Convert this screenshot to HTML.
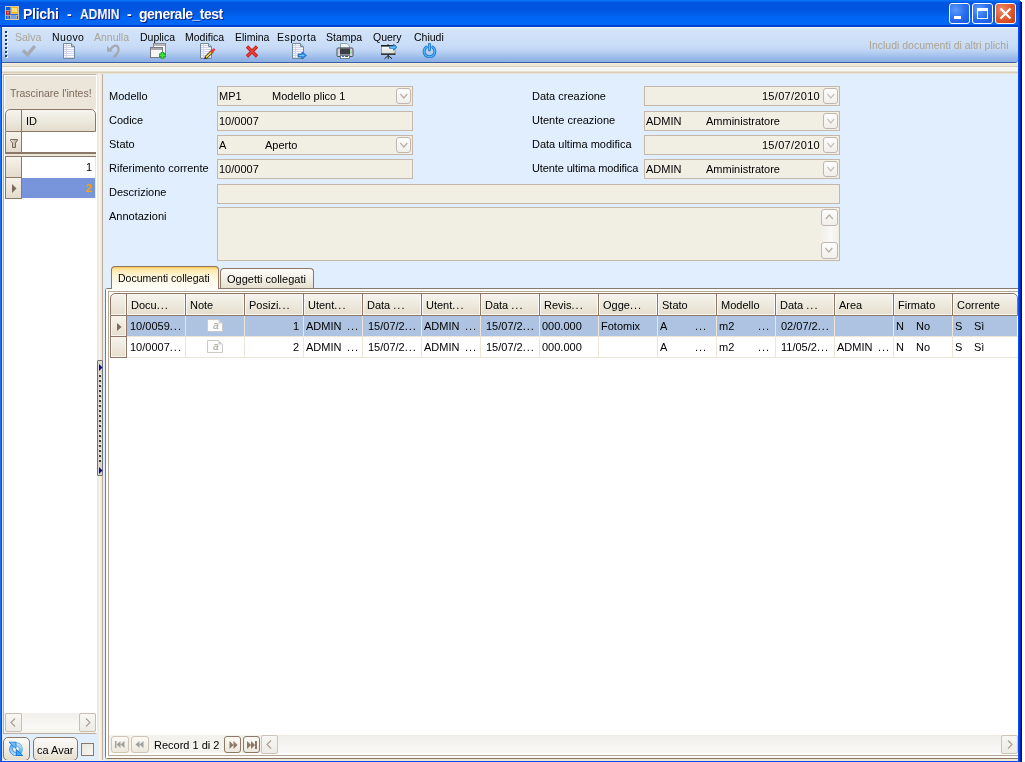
<!DOCTYPE html>
<html><head><meta charset="utf-8">
<style>
*{box-sizing:border-box;margin:0;padding:0}
html,body{width:1025px;height:762px;overflow:hidden;background:#fff}
.t,.lbl,.tbl,.ttl{will-change:transform}
body{position:relative;font-family:"Liberation Sans",sans-serif;font-size:11px;color:#000}
.a{position:absolute}
.t{position:absolute;white-space:nowrap;line-height:13px}
/* window */
#title{left:0;top:0;width:1022px;height:27px;background:linear-gradient(#0a72f8 0px,#0a72f8 1px,#0058e2 2px,#0054e0 3px,#0054e0 9px,#005ee9 14px,#0066f6 18px,#0066f6 25px,#0048d8 25px,#0036c4 27px)}
#lb{left:0;top:27px;width:2px;height:735px;background:linear-gradient(90deg,#1e6ef2 50%,#0050e0 50%)}
#rb{left:1018px;top:2px;width:4px;height:760px;background:linear-gradient(90deg,#0a50f0 0,#0a50f0 1px,#0040e0 1px,#0040e0 2px,#0024b0 2px,#0024b0 3px,#000f80 3px)}
#bb{left:0;top:761px;width:1022px;height:1px;background:#0846ee}
.ttl{position:absolute;top:6px;font-size:14px;font-weight:bold;color:#fff;text-shadow:1px 1px 0 #0a1e80;line-height:17px;white-space:nowrap}
/* toolbar */
#tb{left:2px;top:27px;width:1016px;height:36px;background:linear-gradient(#f0f6fe 0,#f0f6fe 1px,#dde9fb 1px,#d2e3f9 4px,#cadef7 17px,#c4d8f5 22px,#adc9ef 27px,#94b5e7 32px,#8db0e5 35px);border-bottom:1px solid #3a5ea8;border-bottom-right-radius:3px}
.tbl{position:absolute;top:31px;line-height:13px;white-space:nowrap}
.dis{color:#aca492}
#band{left:2px;top:63px;width:1016px;height:11px;background:linear-gradient(#f3efd8 0,#f3efd8 1px,#ebe8d8 1px,#ebe8d8 3px,#d8cfbf 3px,#d8cfbf 4px,#f8f7f3 4px,#f5f4f0 8px,#d8cebc 9px,#d8cebc 10px,#ece6d0 10px)}
/* main content */
#content{left:103px;top:74px;width:915px;height:686px;background:#e0eefd}
#left{left:2px;top:74px;width:95px;height:686px;background:#e0eefd}
#lpanel{left:3px;top:74px;width:94px;height:660px;background:#fff;border:1px solid #a89682}
#splitter{left:97px;top:74px;width:6px;height:686px;background:linear-gradient(90deg,#f1ece2 0,#ebe5d8 1px,#f7f4ee 2px,#f3efe6 4px,#e9e2d5 5px,#bfae9c 5px)}
.lbl{position:absolute;line-height:13px;white-space:nowrap}
.el{letter-spacing:1px}
.box{position:absolute;background:#f1eee4;border:1px solid #c5b8aa}
.dd{position:absolute;width:15px;height:16px;border:1px solid #c0b6ae;border-radius:3px;background:linear-gradient(#fdfdfc,#f0efeb)}
.dd svg{position:absolute;left:3px;top:4px}
</style></head><body>
<div id="title" class="a"></div>
<div id="lb" class="a"></div>


<!-- app icon -->
<svg class="a" style="left:5px;top:6px" width="14" height="14" viewBox="0 0 14 14">
<rect x="0.5" y="0.5" width="13" height="13" fill="#0a58e8" stroke="#d9c8a6"/>
<rect x="1" y="1" width="12" height="12" fill="none"/>
<rect x="5.5" y="0.5" width="8" height="7.5" fill="#d8c8a6"/>
<rect x="6" y="1" width="7" height="6.5" fill="#f2b812"/>
<rect x="7" y="2" width="5" height="4" fill="#ffe070"/>
<rect x="0.5" y="4" width="5" height="0.8" fill="#d8c8a6"/>
<rect x="1" y="4.8" width="4" height="4" fill="#c81a10"/>
<rect x="2" y="5.5" width="2" height="2" fill="#f06a60"/>
<rect x="0.5" y="8.8" width="13" height="0.8" fill="#d8c8a6"/>
<rect x="6" y="9.5" width="5" height="3.5" fill="#6ea0f0"/>
<rect x="5.2" y="9" width="0.8" height="4.5" fill="#d8c8a6"/>
<rect x="11.2" y="9" width="0.8" height="4.5" fill="#d8c8a6"/>
<rect x="2.6" y="9" width="0.8" height="4.5" fill="#d8c8a6"/>
</svg>
<div class="ttl" style="left:23px;letter-spacing:-0.3px">Plichi</div><div class="ttl" style="left:67px">-</div><div class="ttl" style="left:80px;transform:scaleX(0.86);transform-origin:0 0">ADMIN</div><div class="ttl" style="left:127px">-</div><div class="ttl" style="left:139px;letter-spacing:-0.5px">generale_test</div>
<!-- caption buttons -->
<div class="a" style="left:949px;top:3px;width:21px;height:21px;border:1px solid #fff;border-radius:3px;background:radial-gradient(circle at 30% 30%,#5d9af8,#2a6ef0 50%,#1454e0)"><div class="a" style="left:4px;top:12px;width:7px;height:3px;background:#fff"></div></div>
<div class="a" style="left:972px;top:3px;width:21px;height:21px;border:1px solid #fff;border-radius:3px;background:radial-gradient(circle at 30% 30%,#5d9af8,#2a6ef0 50%,#1454e0)"><div class="a" style="left:4px;top:4px;width:11px;height:11px;border:1px solid #fff;border-top-width:3px"></div></div>
<div class="a" style="left:995px;top:3px;width:21px;height:21px;border:1px solid #fff;border-radius:3px;background:radial-gradient(circle at 30% 30%,#f08a6a,#e05a30 50%,#c83a10)">
<svg class="a" style="left:3px;top:3px" width="13" height="13" viewBox="0 0 13 13"><path d="M1.5 1.5 L11.5 11.5 M11.5 1.5 L1.5 11.5" stroke="#fff" stroke-width="2.2"/></svg></div>

<!-- toolbar -->
<div id="tb" class="a"></div>
<div id="band" class="a"></div>
<!-- gripper -->
<svg class="a" style="left:4px;top:30px" width="4" height="28" viewBox="0 0 4 28">
<g fill="#fff"><rect x="2" y="2" width="2" height="2"/><rect x="2" y="6" width="2" height="2"/><rect x="2" y="10" width="2" height="2"/><rect x="2" y="14" width="2" height="2"/><rect x="2" y="18" width="2" height="2"/><rect x="2" y="22" width="2" height="2"/><rect x="2" y="26" width="2" height="2"/></g>
<g fill="#1c3a78"><rect x="1" y="1" width="2" height="2"/><rect x="1" y="5" width="2" height="2"/><rect x="1" y="9" width="2" height="2"/><rect x="1" y="13" width="2" height="2"/><rect x="1" y="17" width="2" height="2"/><rect x="1" y="21" width="2" height="2"/><rect x="1" y="25" width="2" height="2"/></g>
</svg>
<div class="tb-items" style="font-size:10.5px">
<div class="tbl dis" style="left:15px">Salva</div>
<div class="tbl" style="left:52px;letter-spacing:0.4px">Nuovo</div>
<div class="tbl dis" style="left:94px">Annulla</div>
<div class="tbl" style="left:140px">Duplica</div>
<div class="tbl" style="left:185px">Modifica</div>
<div class="tbl" style="left:235px">Elimina</div>
<div class="tbl" style="left:277px;letter-spacing:0.5px">Esporta</div>
<div class="tbl" style="left:326px">Stampa</div>
<div class="tbl" style="left:373px">Query</div>
<div class="tbl" style="left:414px">Chiudi</div>
<div class="tbl dis" style="left:869px;top:39px">Includi documenti di altri plichi</div>
</div>
<!-- toolbar icons -->
<svg class="a" style="left:21px;top:44px" width="16" height="14" viewBox="0 0 16 14"><path d="M2 6.3 L6.5 10.8 L13.8 2" fill="none" stroke="#a6aab2" stroke-width="3.3" stroke-linejoin="miter"/></svg>
<svg class="a" style="left:63px;top:43px" width="12" height="16" viewBox="0 0 12 16"><path d="M0.5 0.5 H8.5 L11.5 3.5 V15.5 H0.5 Z" fill="#fff" stroke="#6f8c9a"/><g stroke="#d2d2ee"><path d="M1 2.5 H8 M1 4.5 H11 M1 6.5 H11 M1 8.5 H11 M1 10.5 H11 M1 12.5 H11 M1 14.5 H11"/><path d="M3.5 1 V15"/></g><path d="M8.5 0.5 V3.5 H11.5" fill="#c4d2d8" stroke="#6f8c9a"/></svg>
<svg class="a" style="left:106px;top:43px" width="15" height="16" viewBox="0 0 15 16"><path d="M4.5 6.5 C6.5 2.5 10.5 1.5 12 4 C13.5 6.5 12 10.5 8.5 13.5" fill="none" stroke="#a4a8b0" stroke-width="2.4" stroke-linecap="round"/><path d="M1 3 V8.7 H6.8 Z" fill="#a4a8b0"/></svg>
<svg class="a" style="left:149px;top:43px" width="18" height="17" viewBox="0 0 18 17"><rect x="4.5" y="0.5" width="12" height="10" fill="#fafafa" stroke="#868a92"/><rect x="5" y="1" width="11" height="2" fill="#b4b6ba"/><rect x="1.5" y="4.5" width="12" height="10" fill="#f6f6f6" stroke="#767a82"/><rect x="2" y="5" width="11" height="2" fill="#a8aaae"/><path d="M13.5 9 V15.8 M10 12.4 H17" stroke="#16a016" stroke-width="3.6"/><path d="M13.5 9.6 V15.2 M10.6 12.4 H16.4" stroke="#44e444" stroke-width="1.6"/></svg>
<svg class="a" style="left:200px;top:43px" width="15" height="16" viewBox="0 0 15 16"><path d="M0.5 0.5 H8.5 L11.5 3.5 V15.5 H0.5 Z" fill="#fff" stroke="#6f8c9a"/><g stroke="#d2d2ee"><path d="M1 2.5 H8 M1 4.5 H11 M1 6.5 H11 M1 8.5 H11 M1 10.5 H11 M1 12.5 H11 M1 14.5 H11"/><path d="M3.5 1 V15"/></g><path d="M8.5 0.5 V3.5 H11.5" fill="#c4d2d8" stroke="#6f8c9a"/><path d="M5.5 15 L12.5 8" stroke="#3a3a20" stroke-width="3.2"/><path d="M5.8 14.7 L12.2 8.3" stroke="#f0d040" stroke-width="1.8"/><path d="M12 8.5 L13.8 6.7" stroke="#e83838" stroke-width="2.6" stroke-linecap="round"/><path d="M4.6 15.6 L5.8 14.4" stroke="#101010" stroke-width="1.4"/></svg>
<svg class="a" style="left:245px;top:45px" width="14" height="13" viewBox="0 0 14 13"><path d="M2 1.5 L12 11.5 M12 1.5 L2 11.5" stroke="#c81c1c" stroke-width="3.4"/><path d="M2.5 2 L11.5 11 M11.5 2 L2.5 11" stroke="#e84a3a" stroke-width="1.4"/></svg>
<svg class="a" style="left:292px;top:43px" width="15" height="17" viewBox="0 0 15 17"><path d="M0.5 0.5 H8.5 L11.5 3.5 V15.5 H0.5 Z" fill="#fff" stroke="#6f8c9a"/><g stroke="#d2d2ee"><path d="M1 2.5 H8 M1 4.5 H11 M1 6.5 H11 M1 8.5 H11 M1 10.5 H11 M1 12.5 H11 M1 14.5 H11"/><path d="M3.5 1 V15"/></g><path d="M8.5 0.5 V3.5 H11.5" fill="#c4d2d8" stroke="#6f8c9a"/><path d="M6 11 H10 V9 L14.5 12.5 L10 16 V14 H6 Z" fill="#3a9aea" stroke="#1a5cb0" stroke-width="0.8"/><path d="M7 12.5 H12" stroke="#8ad4ff" stroke-width="0.8"/></svg>
<svg class="a" style="left:336px;top:43px" width="18" height="16" viewBox="0 0 18 16"><path d="M4.5 0.5 H11 L13.5 3 V5 H4.5 Z" fill="#eef6f4" stroke="#8aa2a8"/><rect x="1" y="5" width="16" height="8.5" rx="1" fill="#d2d3dc" stroke="#4a525a"/><rect x="4" y="5.5" width="10" height="6" fill="#3c3e46"/><rect x="4" y="11.3" width="10" height="1.7" fill="#8c8c9c"/><rect x="4.5" y="12.5" width="9" height="3" fill="#fff" stroke="#5a6a78" stroke-width="0.8"/><rect x="6" y="13" width="2" height="1" fill="#2a70e0"/><rect x="9" y="13" width="3" height="1" fill="#207a50"/><rect x="14.2" y="8.8" width="1.3" height="1.3" fill="#30f030"/></svg>
<svg class="a" style="left:380px;top:43px" width="18" height="17" viewBox="0 0 18 17"><defs><linearGradient id="scr" x1="0" y1="0" x2="0" y2="1"><stop offset="0" stop-color="#fbfcfb"/><stop offset="1" stop-color="#d4dcd8"/></linearGradient></defs><rect x="1.5" y="3" width="13.5" height="8" fill="url(#scr)" stroke="#707070" stroke-width="0.6"/><rect x="1" y="2" width="14.5" height="1.5" fill="#1c1c1c"/><rect x="7.5" y="1" width="1" height="1" fill="#303030"/><rect x="1" y="10.5" width="14.5" height="1.3" fill="#1c1c1c"/><path d="M8.2 11.5 V15.8 M8.2 12.5 L4.5 15.8 M8.2 12.5 L12 15.8" stroke="#202020" stroke-width="1"/><path d="M9.5 3 H13.5 V1 L17 4.2 L13.5 7.4 V5.4 H9.5 Z" fill="#3aa0f0" stroke="#1a68c0" stroke-width="0.6"/><path d="M10.5 4.2 H15" stroke="#a8e0ff" stroke-width="0.7"/></svg>
<svg class="a" style="left:422px;top:43px" width="15" height="15" viewBox="0 0 15 15"><path d="M4.2 4.2 A5.4 5.4 0 1 0 10.8 4.2" fill="none" stroke="#1e7ad4" stroke-width="3" stroke-linecap="round"/><path d="M4.2 4.2 A5.4 5.4 0 1 0 10.8 4.2" fill="none" stroke="#5ab6f0" stroke-width="1.2" stroke-linecap="round"/><path d="M7.5 1.2 V7" stroke="#1e7ad4" stroke-width="2.8" stroke-linecap="round"/><path d="M7.5 1.6 V6.6" stroke="#6ac0f4" stroke-width="1" stroke-linecap="round"/></svg>
<!-- main -->
<div id="left" class="a"></div>
<div id="content" class="a"></div>
<div id="splitter" class="a"></div>
<!-- form -->
<div class="lbl" style="left:109px;top:90px">Modello</div>
<div class="lbl" style="left:109px;top:114px">Codice</div>
<div class="lbl" style="left:109px;top:138px">Stato</div>
<div class="lbl" style="left:109px;top:162px">Riferimento corrente</div>
<div class="lbl" style="left:109px;top:186px">Descrizione</div>
<div class="lbl" style="left:109px;top:210px">Annotazioni</div>
<div class="lbl" style="left:532px;top:90px">Data creazione</div>
<div class="lbl" style="left:532px;top:114px">Utente creazione</div>
<div class="lbl" style="left:532px;top:138px">Data ultima modifica</div>
<div class="lbl" style="left:532px;top:162px;letter-spacing:-0.12px">Utente ultima modifica</div>

<div class="box" style="left:217px;top:86px;width:196px;height:20px"></div>
<div class="lbl" style="left:219px;top:90px">MP1</div><div class="lbl" style="left:272px;top:90px">Modello plico 1</div>
<div class="dd" style="left:396px;top:88px"><svg width="9" height="7" viewBox="0 0 9 7"><path d="M0.3 1 L3.8 5 L7.3 1" fill="none" stroke="#b5aca4" stroke-width="1.2"/></svg></div>

<div class="box" style="left:217px;top:111px;width:196px;height:20px"></div>
<div class="lbl" style="left:219px;top:115px">10/0007</div>

<div class="box" style="left:217px;top:135px;width:196px;height:20px"></div>
<div class="lbl" style="left:219px;top:139px">A</div><div class="lbl" style="left:265px;top:139px">Aperto</div>
<div class="dd" style="left:396px;top:137px"><svg width="9" height="7" viewBox="0 0 9 7"><path d="M0.3 1 L3.8 5 L7.3 1" fill="none" stroke="#b5aca4" stroke-width="1.2"/></svg></div>

<div class="box" style="left:217px;top:159px;width:196px;height:20px"></div>
<div class="lbl" style="left:219px;top:163px">10/0007</div>

<div class="box" style="left:217px;top:184px;width:623px;height:20px"></div>
<div class="box" style="left:217px;top:207px;width:623px;height:54px"></div>
<div class="a" style="left:821px;top:209px;width:17px;height:50px;background:linear-gradient(90deg,#f0eee8,#faf9f6 60%,#f2f0ea)"></div>
<div class="dd" style="left:821px;top:209px;width:17px;height:17px"><svg width="9" height="7" viewBox="0 0 9 7"><path d="M0.8 5 L4.3 1 L7.8 5" fill="none" stroke="#b5aca4" stroke-width="1.2"/></svg></div>
<div class="dd" style="left:821px;top:242px;width:17px;height:17px"><svg width="9" height="7" viewBox="0 0 9 7"><path d="M0.3 1 L3.8 5 L7.3 1" fill="none" stroke="#b5aca4" stroke-width="1.2"/></svg></div>

<div class="box" style="left:644px;top:86px;width:196px;height:20px"></div>
<div class="lbl" style="left:644px;top:90px;width:176px;text-align:right;letter-spacing:0.3px">15/07/2010</div>
<div class="dd" style="left:823px;top:88px"><svg width="9" height="7" viewBox="0 0 9 7"><path d="M0.3 1 L3.8 5 L7.3 1" fill="none" stroke="#c8c0b8" stroke-width="1.2"/></svg></div>

<div class="box" style="left:644px;top:111px;width:196px;height:20px"></div>
<div class="lbl" style="left:646px;top:115px">ADMIN</div><div class="lbl" style="left:706px;top:115px">Amministratore</div>
<div class="dd" style="left:823px;top:113px"><svg width="9" height="7" viewBox="0 0 9 7"><path d="M0.3 1 L3.8 5 L7.3 1" fill="none" stroke="#c8c0b8" stroke-width="1.2"/></svg></div>

<div class="box" style="left:644px;top:135px;width:196px;height:20px"></div>
<div class="lbl" style="left:644px;top:139px;width:176px;text-align:right;letter-spacing:0.3px">15/07/2010</div>
<div class="dd" style="left:823px;top:137px"><svg width="9" height="7" viewBox="0 0 9 7"><path d="M0.3 1 L3.8 5 L7.3 1" fill="none" stroke="#c8c0b8" stroke-width="1.2"/></svg></div>

<div class="box" style="left:644px;top:159px;width:196px;height:20px"></div>
<div class="lbl" style="left:646px;top:163px">ADMIN</div><div class="lbl" style="left:706px;top:163px">Amministratore</div>
<div class="dd" style="left:823px;top:161px"><svg width="9" height="7" viewBox="0 0 9 7"><path d="M0.3 1 L3.8 5 L7.3 1" fill="none" stroke="#c8c0b8" stroke-width="1.2"/></svg></div>
<!-- tabs -->
<div class="a" style="left:105px;top:288px;width:913px;height:471px;border:1px solid #8d7767;border-right:0;border-radius:3px 0 0 3px;background:#fbfaf7"></div>
<div class="a" style="left:106px;top:289px;width:912px;height:469px;border-left:2px solid #fff;border-top:2px solid #fff"></div>
<div class="a" style="left:220px;top:268px;width:94px;height:20px;border:1px solid #8d7767;border-bottom:0;border-radius:4px 4px 0 0;background:linear-gradient(#fcfbf8,#f1ede3 60%,#e6dfcf)"></div>
<div class="t" style="left:227px;top:273px">Oggetti collegati</div>
<div class="a" style="left:111px;top:266px;width:108px;height:23px;border:1px solid #8d7767;border-bottom:0;border-radius:4px 4px 0 0;background:linear-gradient(#fcc14a 0,#fdd77a 1px,#fde9b0 3px,#fef5d8 9px,#fffbee 16px,#fffdf8 23px)"></div>
<div class="t" style="left:118px;top:272px;font-size:10.5px">Documenti collegati</div>
<div class="a" style="left:108px;top:291px;width:910px;height:465px;border:1px solid #b8a898;border-right:0;background:#fff"></div>
<div class="a" style="left:110px;top:293px;width:908px;height:23px;border:1px solid #8d7767;border-radius:5px 5px 0 0;background:linear-gradient(#f6f4ee,#ede8dc 55%,#e5ddcc)"></div>
<div class="a" style="left:111px;top:314px;width:906px;height:1px;background:rgba(255,255,255,.75)"></div>
<div class="a" style="left:125px;top:296px;width:3px;height:19px;background:linear-gradient(90deg,rgba(255,255,255,.75) 33%,#8d7767 33%,#8d7767 67%,rgba(255,255,255,.75) 67%)"></div>
<div class="a" style="left:126px;top:294px;width:1px;height:2px;background:#8d7767"></div>
<div class="a" style="left:184px;top:296px;width:3px;height:19px;background:linear-gradient(90deg,rgba(255,255,255,.75) 33%,#8d7767 33%,#8d7767 67%,rgba(255,255,255,.75) 67%)"></div>
<div class="a" style="left:185px;top:294px;width:1px;height:2px;background:#8d7767"></div>
<div class="a" style="left:243px;top:296px;width:3px;height:19px;background:linear-gradient(90deg,rgba(255,255,255,.75) 33%,#8d7767 33%,#8d7767 67%,rgba(255,255,255,.75) 67%)"></div>
<div class="a" style="left:244px;top:294px;width:1px;height:2px;background:#8d7767"></div>
<div class="a" style="left:302px;top:296px;width:3px;height:19px;background:linear-gradient(90deg,rgba(255,255,255,.75) 33%,#8d7767 33%,#8d7767 67%,rgba(255,255,255,.75) 67%)"></div>
<div class="a" style="left:303px;top:294px;width:1px;height:2px;background:#8d7767"></div>
<div class="a" style="left:361px;top:296px;width:3px;height:19px;background:linear-gradient(90deg,rgba(255,255,255,.75) 33%,#8d7767 33%,#8d7767 67%,rgba(255,255,255,.75) 67%)"></div>
<div class="a" style="left:362px;top:294px;width:1px;height:2px;background:#8d7767"></div>
<div class="a" style="left:420px;top:296px;width:3px;height:19px;background:linear-gradient(90deg,rgba(255,255,255,.75) 33%,#8d7767 33%,#8d7767 67%,rgba(255,255,255,.75) 67%)"></div>
<div class="a" style="left:421px;top:294px;width:1px;height:2px;background:#8d7767"></div>
<div class="a" style="left:479px;top:296px;width:3px;height:19px;background:linear-gradient(90deg,rgba(255,255,255,.75) 33%,#8d7767 33%,#8d7767 67%,rgba(255,255,255,.75) 67%)"></div>
<div class="a" style="left:480px;top:294px;width:1px;height:2px;background:#8d7767"></div>
<div class="a" style="left:538px;top:296px;width:3px;height:19px;background:linear-gradient(90deg,rgba(255,255,255,.75) 33%,#8d7767 33%,#8d7767 67%,rgba(255,255,255,.75) 67%)"></div>
<div class="a" style="left:539px;top:294px;width:1px;height:2px;background:#8d7767"></div>
<div class="a" style="left:597px;top:296px;width:3px;height:19px;background:linear-gradient(90deg,rgba(255,255,255,.75) 33%,#8d7767 33%,#8d7767 67%,rgba(255,255,255,.75) 67%)"></div>
<div class="a" style="left:598px;top:294px;width:1px;height:2px;background:#8d7767"></div>
<div class="a" style="left:656px;top:296px;width:3px;height:19px;background:linear-gradient(90deg,rgba(255,255,255,.75) 33%,#8d7767 33%,#8d7767 67%,rgba(255,255,255,.75) 67%)"></div>
<div class="a" style="left:657px;top:294px;width:1px;height:2px;background:#8d7767"></div>
<div class="a" style="left:715px;top:296px;width:3px;height:19px;background:linear-gradient(90deg,rgba(255,255,255,.75) 33%,#8d7767 33%,#8d7767 67%,rgba(255,255,255,.75) 67%)"></div>
<div class="a" style="left:716px;top:294px;width:1px;height:2px;background:#8d7767"></div>
<div class="a" style="left:774px;top:296px;width:3px;height:19px;background:linear-gradient(90deg,rgba(255,255,255,.75) 33%,#8d7767 33%,#8d7767 67%,rgba(255,255,255,.75) 67%)"></div>
<div class="a" style="left:775px;top:294px;width:1px;height:2px;background:#8d7767"></div>
<div class="a" style="left:833px;top:296px;width:3px;height:19px;background:linear-gradient(90deg,rgba(255,255,255,.75) 33%,#8d7767 33%,#8d7767 67%,rgba(255,255,255,.75) 67%)"></div>
<div class="a" style="left:834px;top:294px;width:1px;height:2px;background:#8d7767"></div>
<div class="a" style="left:892px;top:296px;width:3px;height:19px;background:linear-gradient(90deg,rgba(255,255,255,.75) 33%,#8d7767 33%,#8d7767 67%,rgba(255,255,255,.75) 67%)"></div>
<div class="a" style="left:893px;top:294px;width:1px;height:2px;background:#8d7767"></div>
<div class="a" style="left:951px;top:296px;width:3px;height:19px;background:linear-gradient(90deg,rgba(255,255,255,.75) 33%,#8d7767 33%,#8d7767 67%,rgba(255,255,255,.75) 67%)"></div>
<div class="a" style="left:952px;top:294px;width:1px;height:2px;background:#8d7767"></div>
<div class="t" style="left:131px;top:299px">Docu<span class="el">...</span></div>
<div class="t" style="left:190px;top:299px">Note</div>
<div class="t" style="left:249px;top:299px">Posizi<span class="el">...</span></div>
<div class="t" style="left:308px;top:299px">Utent<span class="el">...</span></div>
<div class="t" style="left:367px;top:299px">Data <span class="el">...</span></div>
<div class="t" style="left:426px;top:299px">Utent<span class="el">...</span></div>
<div class="t" style="left:485px;top:299px">Data <span class="el">...</span></div>
<div class="t" style="left:544px;top:299px">Revis<span class="el">...</span></div>
<div class="t" style="left:603px;top:299px">Ogge<span class="el">...</span></div>
<div class="t" style="left:662px;top:299px">Stato</div>
<div class="t" style="left:721px;top:299px">Modello</div>
<div class="t" style="left:780px;top:299px">Data <span class="el">...</span></div>
<div class="t" style="left:839px;top:299px">Area</div>
<div class="t" style="left:898px;top:299px">Firmato</div>
<div class="t" style="left:957px;top:299px">Corrente</div>
<div class="a" style="left:127px;top:316px;width:890px;height:20px;background:#adc3e1"></div>
<div class="a" style="left:127px;top:336px;width:891px;height:1px;background:#ede6d8"></div>
<div class="a" style="left:185px;top:316px;width:1px;height:21px;background:#ede6d8"></div>
<div class="a" style="left:244px;top:316px;width:1px;height:21px;background:#ede6d8"></div>
<div class="a" style="left:303px;top:316px;width:1px;height:21px;background:#ede6d8"></div>
<div class="a" style="left:362px;top:316px;width:1px;height:21px;background:#ede6d8"></div>
<div class="a" style="left:421px;top:316px;width:1px;height:21px;background:#ede6d8"></div>
<div class="a" style="left:480px;top:316px;width:1px;height:21px;background:#ede6d8"></div>
<div class="a" style="left:539px;top:316px;width:1px;height:21px;background:#ede6d8"></div>
<div class="a" style="left:598px;top:316px;width:1px;height:21px;background:#ede6d8"></div>
<div class="a" style="left:657px;top:316px;width:1px;height:21px;background:#ede6d8"></div>
<div class="a" style="left:716px;top:316px;width:1px;height:21px;background:#ede6d8"></div>
<div class="a" style="left:775px;top:316px;width:1px;height:21px;background:#ede6d8"></div>
<div class="a" style="left:834px;top:316px;width:1px;height:21px;background:#ede6d8"></div>
<div class="a" style="left:893px;top:316px;width:1px;height:21px;background:#ede6d8"></div>
<div class="a" style="left:952px;top:316px;width:1px;height:21px;background:#ede6d8"></div>
<div class="a" style="left:110px;top:316px;width:17px;height:21px;border:1px solid #8d7767;border-top:0;background:linear-gradient(#f7f4ec,#e6dfcf)"></div>
<div class="a" style="left:111px;top:316px;width:15px;height:20px;border:1px solid #fff;border-top:0;opacity:.7"></div>
<div class="a" style="left:127px;top:337px;width:890px;height:20px;background:#fff"></div>
<div class="a" style="left:127px;top:357px;width:891px;height:1px;background:#ede6d8"></div>
<div class="a" style="left:185px;top:337px;width:1px;height:21px;background:#ede6d8"></div>
<div class="a" style="left:244px;top:337px;width:1px;height:21px;background:#ede6d8"></div>
<div class="a" style="left:303px;top:337px;width:1px;height:21px;background:#ede6d8"></div>
<div class="a" style="left:362px;top:337px;width:1px;height:21px;background:#ede6d8"></div>
<div class="a" style="left:421px;top:337px;width:1px;height:21px;background:#ede6d8"></div>
<div class="a" style="left:480px;top:337px;width:1px;height:21px;background:#ede6d8"></div>
<div class="a" style="left:539px;top:337px;width:1px;height:21px;background:#ede6d8"></div>
<div class="a" style="left:598px;top:337px;width:1px;height:21px;background:#ede6d8"></div>
<div class="a" style="left:657px;top:337px;width:1px;height:21px;background:#ede6d8"></div>
<div class="a" style="left:716px;top:337px;width:1px;height:21px;background:#ede6d8"></div>
<div class="a" style="left:775px;top:337px;width:1px;height:21px;background:#ede6d8"></div>
<div class="a" style="left:834px;top:337px;width:1px;height:21px;background:#ede6d8"></div>
<div class="a" style="left:893px;top:337px;width:1px;height:21px;background:#ede6d8"></div>
<div class="a" style="left:952px;top:337px;width:1px;height:21px;background:#ede6d8"></div>
<div class="a" style="left:110px;top:337px;width:17px;height:21px;border:1px solid #8d7767;border-top:0;background:linear-gradient(#f7f4ec,#e6dfcf)"></div>
<div class="a" style="left:111px;top:337px;width:15px;height:20px;border:1px solid #fff;border-top:0;opacity:.7"></div>
<div class="t" style="left:130px;top:320px">10/0059<span class="el">...</span></div>
<svg class="a" style="left:207px;top:319px" width="16" height="13" viewBox="0 0 16 13"><path d="M0.5 0.5 H11.5 L15.5 4.5 V12.5 H0.5 Z" fill="#fdfdfd" stroke="#c9c9c9"/><path d="M11.5 0.5 V4.5 H15.5 Z" fill="#d0d0d0"/><text x="6" y="10" font-family="Liberation Sans" font-style="italic" font-size="10" fill="#a0a0a0">a</text></svg>
<div class="t" style="left:244px;top:320px;width:55px;text-align:right">1</div>
<div class="t" style="left:306px;top:320px">ADMIN</div>
<div class="t" style="left:347px;top:320px"><span class="el">...</span></div>
<div class="t" style="left:368px;top:320px">15/07/2<span class="el">...</span></div>
<div class="t" style="left:424px;top:320px">ADMIN</div>
<div class="t" style="left:465px;top:320px"><span class="el">...</span></div>
<div class="t" style="left:486px;top:320px">15/07/2<span class="el">...</span></div>
<div class="t" style="left:542px;top:320px">000.000</div>
<div class="t" style="left:601px;top:320px">Fotomix</div>
<div class="t" style="left:660px;top:320px">A</div>
<div class="t" style="left:695px;top:320px"><span class="el">...</span></div>
<div class="t" style="left:719px;top:320px">m2</div>
<div class="t" style="left:758px;top:320px"><span class="el">...</span></div>
<div class="t" style="left:781px;top:320px">02/07/2<span class="el">...</span></div>
<div class="t" style="left:896px;top:320px">N</div>
<div class="t" style="left:916px;top:320px">No</div>
<div class="t" style="left:955px;top:320px">S</div>
<div class="t" style="left:974px;top:320px">Sì</div>
<div class="t" style="left:130px;top:341px">10/0007<span class="el">...</span></div>
<svg class="a" style="left:207px;top:340px" width="16" height="13" viewBox="0 0 16 13"><path d="M0.5 0.5 H11.5 L15.5 4.5 V12.5 H0.5 Z" fill="#fdfdfd" stroke="#c9c9c9"/><path d="M11.5 0.5 V4.5 H15.5 Z" fill="#d0d0d0"/><text x="6" y="10" font-family="Liberation Sans" font-style="italic" font-size="10" fill="#a0a0a0">a</text></svg>
<div class="t" style="left:244px;top:341px;width:55px;text-align:right">2</div>
<div class="t" style="left:306px;top:341px">ADMIN</div>
<div class="t" style="left:347px;top:341px"><span class="el">...</span></div>
<div class="t" style="left:368px;top:341px">15/07/2<span class="el">...</span></div>
<div class="t" style="left:424px;top:341px">ADMIN</div>
<div class="t" style="left:465px;top:341px"><span class="el">...</span></div>
<div class="t" style="left:486px;top:341px">15/07/2<span class="el">...</span></div>
<div class="t" style="left:542px;top:341px">000.000</div>
<div class="t" style="left:660px;top:341px">A</div>
<div class="t" style="left:695px;top:341px"><span class="el">...</span></div>
<div class="t" style="left:719px;top:341px">m2</div>
<div class="t" style="left:758px;top:341px"><span class="el">...</span></div>
<div class="t" style="left:781px;top:341px">11/05/2<span class="el">...</span></div>
<div class="t" style="left:837px;top:341px">ADMIN</div>
<div class="t" style="left:878px;top:341px"><span class="el">...</span></div>
<div class="t" style="left:896px;top:341px">N</div>
<div class="t" style="left:916px;top:341px">No</div>
<div class="t" style="left:955px;top:341px">S</div>
<div class="t" style="left:974px;top:341px">Sì</div>
<svg class="a" style="left:117px;top:323px" width="5" height="8" viewBox="0 0 5 8"><path d="M0 0 L4.5 4 L0 8 Z" fill="#7d6a5c"/></svg>
<!-- navigator -->
<div class="a" style="left:109px;top:735px;width:909px;height:18px;background:linear-gradient(#e8e6e0 0,#f1efea 1px,#f8f7f4 70%,#f8f7f4)"></div>
<div class="a" style="left:109px;top:735px;width:152px;height:18px;background:#f4f2ec"></div>
<div class="a" style="left:111px;top:736px;width:18px;height:17px;border:1px solid #cfc3b6;border-radius:3px;background:linear-gradient(#fbfaf6,#ede8dc)"><svg class="a" style="left:3px;top:4px" width="10" height="7" viewBox="0 0 10 7"><rect x="0" y="0" width="1.5" height="7" fill="#a0a09c"/><path d="M5.5 0 V7 L1.5 3.5 Z M9.5 0 V7 L5.5 3.5 Z" fill="#a0a09c"/></svg></div>
<div class="a" style="left:131px;top:736px;width:18px;height:17px;border:1px solid #cfc3b6;border-radius:3px;background:linear-gradient(#fbfaf6,#ede8dc)"><svg class="a" style="left:3px;top:4px" width="9" height="7" viewBox="0 0 9 7"><path d="M4.5 0 V7 L0.5 3.5 Z M8.5 0 V7 L4.5 3.5 Z" fill="#a0a09c"/></svg></div>
<div class="t" style="left:154px;top:739px">Record 1 di 2</div>
<div class="a" style="left:224px;top:736px;width:17px;height:17px;border:1px solid #8d7767;border-radius:3px;background:linear-gradient(#fbfaf6,#ede8dc)"><svg class="a" style="left:4px;top:4px" width="9" height="8" viewBox="0 0 9 8"><path d="M0.5 0 V8 L4.5 4 Z M4.5 0 V8 L8.5 4 Z" fill="#8d7767"/></svg></div>
<div class="a" style="left:243px;top:736px;width:17px;height:17px;border:1px solid #8d7767;border-radius:3px;background:linear-gradient(#fbfaf6,#ede8dc)"><svg class="a" style="left:3px;top:4px" width="10" height="8" viewBox="0 0 10 8"><path d="M0 0 V8 L4 4 Z M4 0 V8 L8 4 Z" fill="#8d7767"/><rect x="8" y="0" width="2" height="8" fill="#8d7767"/></svg></div>
<div class="a" style="left:261px;top:735px;width:17px;height:19px;border:1px solid #cfc3b6;border-radius:2px;background:linear-gradient(#f8f7f3,#ecebe5)"><svg class="a" style="left:4px;top:4px" width="6" height="9" viewBox="0 0 6 9"><path d="M5 0.5 L1 4.5 L5 8.5" fill="none" stroke="#a99c90" stroke-width="1.1"/></svg></div>
<div class="a" style="left:1001px;top:735px;width:17px;height:19px;border:1px solid #cfc3b6;border-radius:2px;background:linear-gradient(#f8f7f3,#ecebe5)"><svg class="a" style="left:5px;top:4px" width="6" height="9" viewBox="0 0 6 9"><path d="M1 0.5 L5 4.5 L1 8.5" fill="none" stroke="#a99c90" stroke-width="1.1"/></svg></div>
<!-- /grid -->
<!-- left panel -->
<div class="a" style="left:3px;top:74px;width:94px;height:660px;border:1px solid #bcaea0;border-right:1px solid #fff;background:#fff"></div>
<div class="a" style="left:4px;top:75px;width:92px;height:34px;background:#ebe6d9;border-top:1px solid #fff;border-left:1px solid #fff"></div>
<div class="t" style="left:10px;top:87px;color:#7d6a5c;width:84px;overflow:hidden;font-size:10.5px">Trascinare l'intes!</div>
<!-- left grid header -->
<div class="a" style="left:5px;top:109px;width:91px;height:23px;border:1px solid #8d7767;border-radius:5px 5px 0 0;background:linear-gradient(#f6f4ee,#ece7db 60%,#e3dccd)"></div>
<div class="a" style="left:21px;top:110px;width:1px;height:21px;background:#8d7767"></div>
<div class="t" style="left:26px;top:115px">ID</div>
<!-- filter row -->
<div class="a" style="left:5px;top:132px;width:17px;height:21px;border:1px solid #8d7767;border-top:0;background:linear-gradient(#f6f3ea,#e4dccb)"></div>
<div class="a" style="left:22px;top:132px;width:74px;height:20px;background:#fff"></div>
<svg class="a" style="left:10px;top:139px" width="8" height="9" viewBox="0 0 8 9"><defs><linearGradient id="fg" x1="0" y1="0" x2="1" y2="0"><stop offset="0" stop-color="#f4f0ea"/><stop offset="1" stop-color="#a89888"/></linearGradient></defs><path d="M0.5 0.5 H7.5 V1.5 L5.5 4 V8.5 H2.5 V4 L0.5 1.5 Z" fill="url(#fg)" stroke="#7d6a5c"/></svg>
<div class="a" style="left:5px;top:152px;width:91px;height:5px;background:#ece6da;border-top:2px solid #8d7767;border-bottom:1px solid #8d7767"></div>
<!-- rows -->
<div class="a" style="left:5px;top:157px;width:17px;height:21px;border-left:1px solid #8d7767;border-right:1px solid #8d7767;border-bottom:1px solid #8d7767;background:linear-gradient(#f6f3ea,#e4dccb)"></div>
<div class="a" style="left:22px;top:157px;width:73px;height:20px;background:#fff"></div><div class="a" style="left:95px;top:157px;width:1px;height:41px;background:#ede6d8"></div>
<div class="t" style="left:22px;top:161px;width:70px;text-align:right">1</div>
<div class="a" style="left:5px;top:178px;width:17px;height:21px;border-left:1px solid #8d7767;border-right:1px solid #8d7767;border-bottom:1px solid #8d7767;background:linear-gradient(#f6f3ea,#e4dccb)"></div>
<div class="a" style="left:22px;top:178px;width:73px;height:20px;background:#7895dc"></div>
<div class="t" style="left:22px;top:182px;width:70px;text-align:right;color:#ffa500;font-weight:bold">2</div>
<svg class="a" style="left:12px;top:184px" width="5" height="9" viewBox="0 0 5 9"><path d="M0 0 L4.5 4.5 L0 9 Z" fill="#7d6a5c"/></svg>
<!-- left scrollbar -->
<div class="a" style="left:4px;top:713px;width:92px;height:20px;background:linear-gradient(#f1efe9,#faf9f6 70%,#f3f1ea)"></div>
<div class="a" style="left:5px;top:713px;width:17px;height:19px;border:1px solid #c9bcb0;border-radius:2px;background:linear-gradient(#f8f7f3,#ecebe5)"></div>
<svg class="a" style="left:10px;top:718px" width="6" height="9" viewBox="0 0 6 9"><path d="M5 0.5 L1 4.5 L5 8.5" fill="none" stroke="#a99c90" stroke-width="1.1"/></svg>
<div class="a" style="left:79px;top:713px;width:17px;height:19px;border:1px solid #c9bcb0;border-radius:2px;background:linear-gradient(#f8f7f3,#ecebe5)"></div>
<svg class="a" style="left:85px;top:718px" width="6" height="9" viewBox="0 0 6 9"><path d="M1 0.5 L5 4.5 L1 8.5" fill="none" stroke="#a99c90" stroke-width="1.1"/></svg>
<!-- bottom left buttons -->
<div class="a" style="left:3px;top:737px;width:27px;height:24px;border:1px solid #8d7767;border-radius:5px;background:linear-gradient(#fcfbf8,#f0ece2 60%,#e4ddcd)"></div>
<svg class="a" style="left:8px;top:741px" width="16" height="16" viewBox="0 0 16 16"><defs><linearGradient id="rg1" x1="0" y1="0" x2="0" y2="1"><stop offset="0" stop-color="#4aa2ec"/><stop offset="1" stop-color="#b8dcf6"/></linearGradient><linearGradient id="rg2" x1="0" y1="0" x2="0" y2="1"><stop offset="0" stop-color="#cfe6f8"/><stop offset="1" stop-color="#3aa6f0"/></linearGradient></defs>
<path d="M8 3.2 A4.9 4.9 0 0 0 8 13" fill="none" stroke="#3a8ee0" stroke-width="4"/><path d="M8 3.2 A4.9 4.9 0 0 0 8 13" fill="none" stroke="url(#rg1)" stroke-width="2.6"/>
<path d="M8 3.2 A4.9 4.9 0 0 1 8 13" fill="none" stroke="#58a8e8" stroke-width="4"/><path d="M8 3.2 A4.9 4.9 0 0 1 8 13" fill="none" stroke="url(#rg2)" stroke-width="2.6"/>
<path d="M1 1.2 H8 V7.5 Z" fill="#6cc0f8" stroke="#2a7ed8" stroke-width="0.9"/>
<path d="M8.3 8.5 V14.5 H14.8 Z" fill="#30b0f8" stroke="#1a6ed0" stroke-width="0.9"/></svg>
<div class="a" style="left:33px;top:737px;width:45px;height:24px;border:1px solid #8d7767;border-radius:5px;background:linear-gradient(#fcfbf8,#f0ece2 60%,#e4ddcd)"></div>
<div class="t" style="left:37px;top:744px;font-size:11px">ca Avar</div>
<div class="a" style="left:81px;top:743px;width:13px;height:13px;border:1px solid #8d7767;background:linear-gradient(135deg,#e8e6dc,#f8f7f3)"></div>
<!-- splitter handle -->
<div class="a" style="left:97px;top:360px;width:6px;height:116px;border:1px solid #737373;background:#dcd8d0;border-radius:1px"></div>
<svg class="a" style="left:99px;top:363px" width="4" height="112" viewBox="0 0 4 112"><path d="M0 1 L3.5 4.5 L0 8 Z" fill="#0a0a8c"/><path d="M0 104 L3.5 107.5 L0 111 Z" fill="#0a0a8c"/><g fill="#fff"><rect x="1" y="11" width="1.5" height="1"/><rect x="1" y="16" width="1.5" height="1"/><rect x="1" y="21" width="1.5" height="1"/><rect x="1" y="26" width="1.5" height="1"/><rect x="1" y="31" width="1.5" height="1"/><rect x="1" y="36" width="1.5" height="1"/><rect x="1" y="41" width="1.5" height="1"/><rect x="1" y="46" width="1.5" height="1"/><rect x="1" y="51" width="1.5" height="1"/><rect x="1" y="56" width="1.5" height="1"/><rect x="1" y="61" width="1.5" height="1"/><rect x="1" y="66" width="1.5" height="1"/><rect x="1" y="71" width="1.5" height="1"/><rect x="1" y="76" width="1.5" height="1"/><rect x="1" y="81" width="1.5" height="1"/><rect x="1" y="86" width="1.5" height="1"/><rect x="1" y="91" width="1.5" height="1"/><rect x="1" y="96" width="1.5" height="1"/></g><g fill="#3c3c3c"><rect x="0" y="12" width="2" height="2"/><rect x="0" y="17" width="2" height="2"/><rect x="0" y="22" width="2" height="2"/><rect x="0" y="27" width="2" height="2"/><rect x="0" y="32" width="2" height="2"/><rect x="0" y="37" width="2" height="2"/><rect x="0" y="42" width="2" height="2"/><rect x="0" y="47" width="2" height="2"/><rect x="0" y="52" width="2" height="2"/><rect x="0" y="57" width="2" height="2"/><rect x="0" y="62" width="2" height="2"/><rect x="0" y="67" width="2" height="2"/><rect x="0" y="72" width="2" height="2"/><rect x="0" y="77" width="2" height="2"/><rect x="0" y="82" width="2" height="2"/><rect x="0" y="87" width="2" height="2"/><rect x="0" y="92" width="2" height="2"/><rect x="0" y="97" width="2" height="2"/></g></svg>
<div class="a" style="left:2px;top:760px;width:1016px;height:1px;background:#f4f1e2"></div>
<div class="a" style="left:105px;top:759px;width:913px;height:2px;background:#ece6d2"></div>
<div id="bb" class="a"></div>
<div id="rb" class="a"></div>
<div class="a corner-tr" style="left:1020px;top:0;width:2px;height:1px;background:#fff"></div><div class="a" style="left:1021px;top:1px;width:1px;height:1px;background:#fff"></div>
</body></html>
